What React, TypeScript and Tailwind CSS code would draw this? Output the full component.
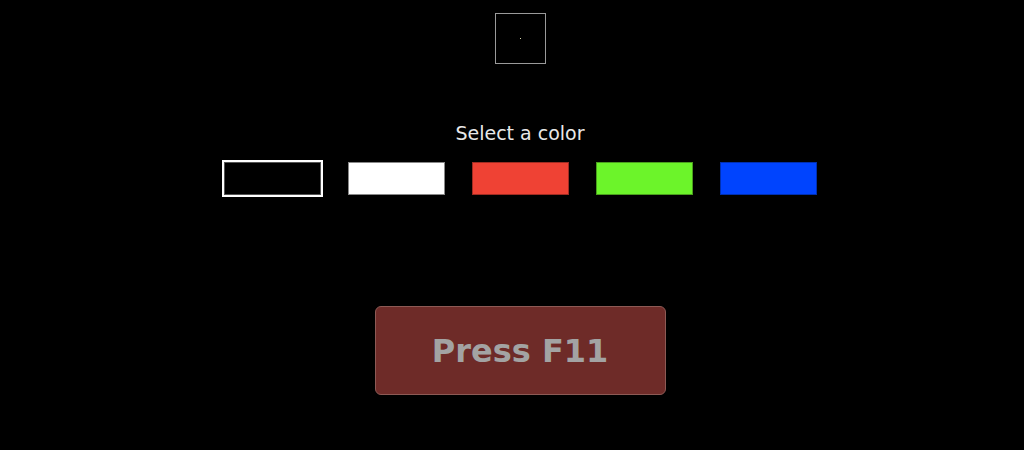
export default function App() {
  const swatches = [
    { c: "bg-black", b: "border-[#555]", sel: true },
    { c: "bg-white", b: "border-[#888]", sel: false },
    { c: "bg-[#ef4234]", b: "border-[#a02c22]", sel: false },
    { c: "bg-[#6cf42a]", b: "border-[#4a9f1d]", sel: false },
    { c: "bg-[#0044fe]", b: "border-[#0030b0]", sel: false },
  ];
  return (
    <div className="w-[1024px] h-[450px] bg-black overflow-hidden pl-4 flex flex-col items-center" style={{ fontFamily: '"DejaVu Sans", Verdana, sans-serif' }}>
      <div className="mt-[13px] w-[51px] h-[51px] border border-[#9a9a9a] flex items-center justify-center">
        <div className="w-px h-px bg-[#d8d8b0]" />
      </div>
      <div className="mt-[57px] text-[19px] leading-[24px] text-[#e8e8e8]">Select a color</div>
      <div className="mt-[17px] flex gap-[27px] items-center">
        {swatches.map((s, i) => (
          <div
            key={i}
            className={`w-[97px] h-[33px] border ${s.c} ${s.b} ${s.sel ? "outline-2 outline-white" : ""}`}
          />
        ))}
      </div>
      <div className="mt-[111px] w-[291px] h-[89px] rounded-[6px] bg-[#6e2b28] border border-[#8d5a55] flex items-center justify-center">
        <span className="text-[32px] font-bold text-[#a3a3a3]">Press F11</span>
      </div>
    </div>
  );
}
